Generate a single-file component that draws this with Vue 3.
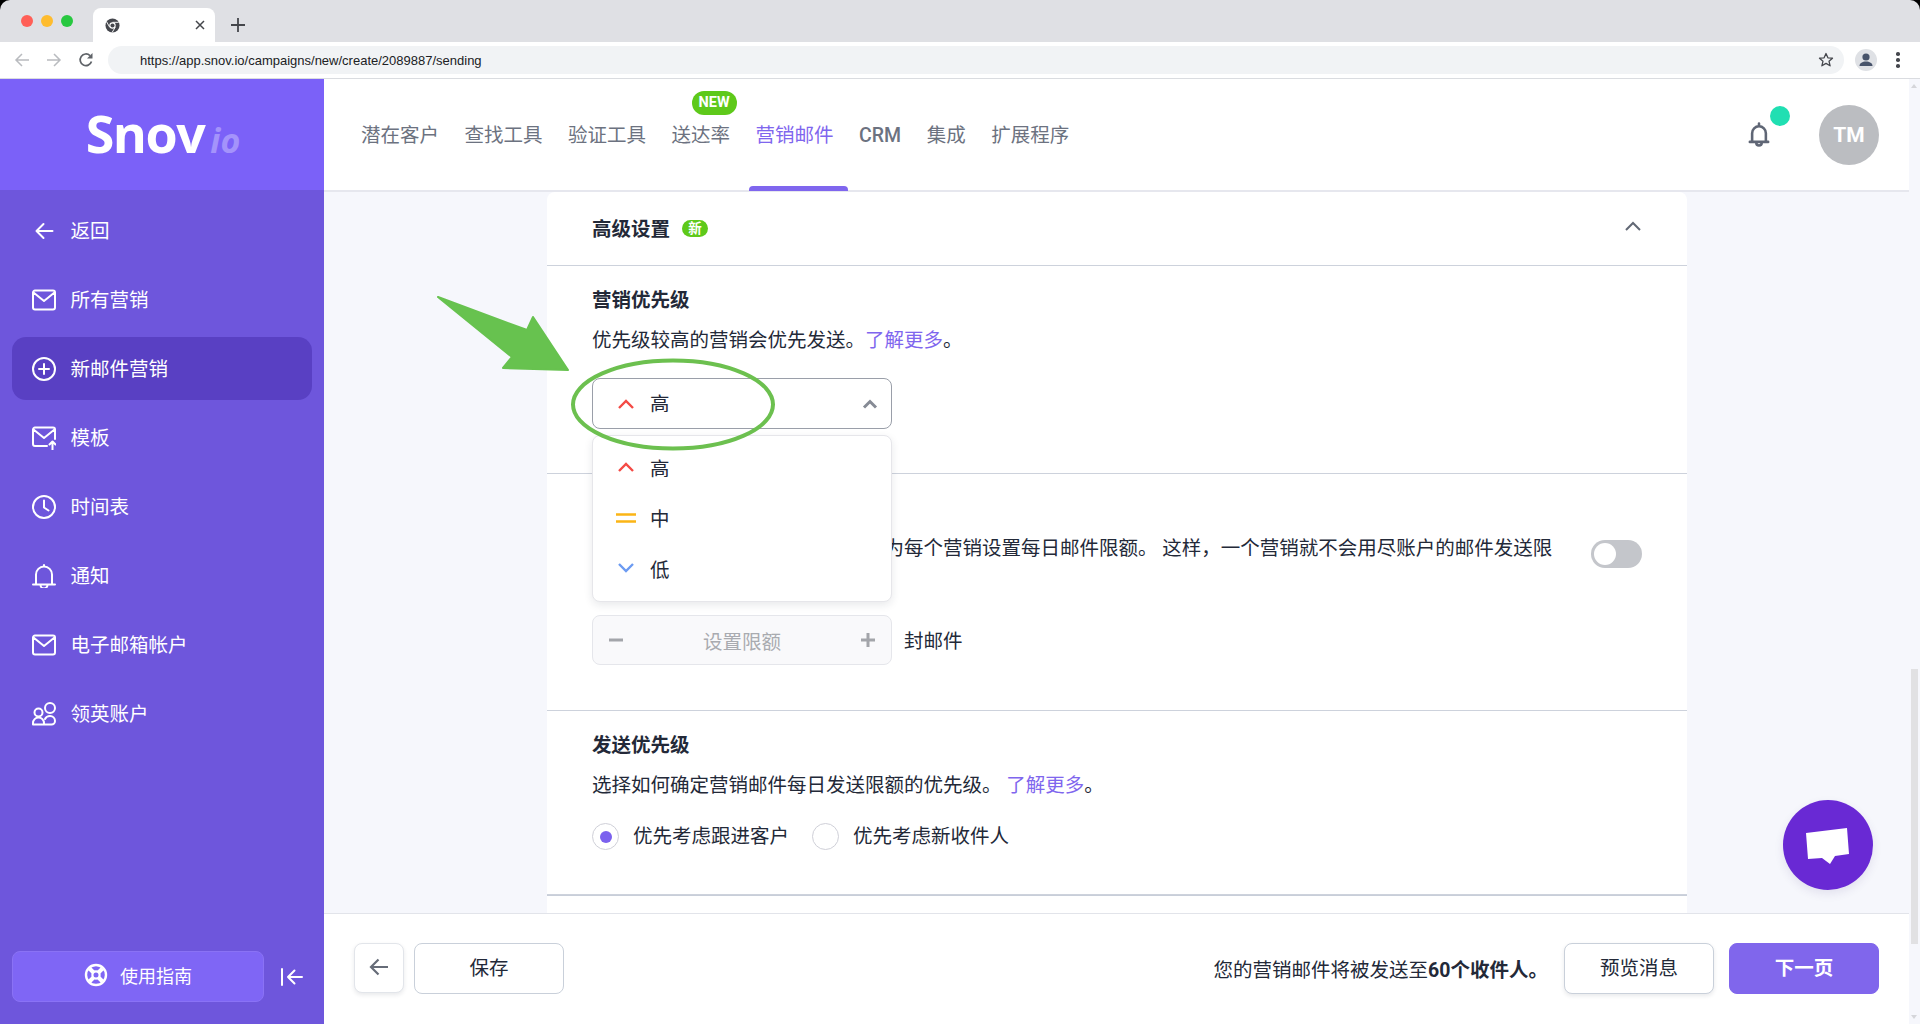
<template>
  <div class="browser">
    <!-- browser chrome -->
    <div class="tabstrip">
      <div class="lights">
        <span class="light red"></span>
        <span class="light yellow"></span>
        <span class="light green"></span>
      </div>
      <div class="tab">
        <svg class="favicon" viewBox="0 0 16 16" width="15" height="15">
          <circle cx="8" cy="8" r="7.5" fill="#45474d" />
          <circle cx="8" cy="8" r="3.4" fill="#fff" />
          <circle cx="8" cy="8" r="2.2" fill="#45474d" />
          <path d="M8 4.6h6.6M5 9.8 1.8 4.2M10.9 9.8l-3.3 5.6" stroke="#fff" stroke-width="1" />
        </svg>
        <svg class="tab-x" viewBox="0 0 10 10" width="10" height="10">
          <path d="M1 1l8 8M9 1l-8 8" stroke="#44464b" stroke-width="1.5" />
        </svg>
      </div>
      <svg class="tab-plus" viewBox="0 0 14 14" width="14" height="14">
        <path d="M7 0v14M0 7h14" stroke="#44464b" stroke-width="1.8" />
      </svg>
    </div>
    <div class="toolbar">
      <svg class="nav-btn" viewBox="0 0 16 16" width="16" height="16">
        <path d="M15 8H2M8 2 2 8l6 6" fill="none" stroke="#b9bbbf" stroke-width="1.5" />
      </svg>
      <svg class="nav-btn" viewBox="0 0 16 16" width="16" height="16">
        <path d="M1 8h13M8 2l6 6-6 6" fill="none" stroke="#b9bbbf" stroke-width="1.5" />
      </svg>
      <svg class="nav-btn" viewBox="0 0 16 16" width="16" height="16">
        <path d="M13.5 9.5A5.8 5.8 0 1 1 12 3.6" fill="none" stroke="#5f6368" stroke-width="1.7" />
        <path d="M14.5 1v5.5H9z" fill="#5f6368" />
      </svg>
      <div class="address">
        <span class="url">https://app.snov.io/campaigns/new/create/2089887/sending</span>
        <svg viewBox="0 0 16 16" width="16" height="16">
          <path d="M8 1.5l1.9 4.3 4.6.4-3.5 3 1.1 4.6L8 11.4l-4.1 2.4L5 9.2l-3.5-3 4.6-.4z" fill="none" stroke="#45474d" stroke-width="1.3" stroke-linejoin="round" />
        </svg>
      </div>
      <div class="profile">
        <svg viewBox="0 0 22 22" width="22" height="22">
          <circle cx="11" cy="11" r="11" fill="#dfe1e5" />
          <circle cx="11" cy="8" r="3.6" fill="#47536a" />
          <path d="M4.5 17c0-3 3-4.5 6.5-4.5s6.5 1.5 6.5 4.5z" fill="#47536a" />
        </svg>
      </div>
      <div class="kebab"><i></i><i></i><i></i></div>
    </div>

    <div class="page">
      <aside class="sidebar">
        <div class="logo"><span class="logo-main">Snov</span><span class="logo-io">io</span></div>
        <nav class="side-nav">
          <a v-for="item in sideItems" :key="item.label" class="side-item" :class="{ active: item.active }">
            <svg class="side-icon" viewBox="0 0 24 24" width="24" height="24">
              <path :d="item.icon" fill="none" stroke="#fff" stroke-width="2" stroke-linecap="round" stroke-linejoin="round" />
            </svg>
            <span>{{ item.label }}</span>
          </a>
        </nav>
        <div class="side-bottom">
          <button class="guide">
            <svg viewBox="0 0 24 24" width="24" height="24">
              <circle cx="12" cy="12" r="10" fill="none" stroke="#fff" stroke-width="2.4" />
              <circle cx="12" cy="12" r="3.6" fill="none" stroke="#fff" stroke-width="2.2" />
              <path d="M5.5 5.5l4 4M18.5 5.5l-4 4M5.5 18.5l4-4M18.5 18.5l-4-4" stroke="#fff" stroke-width="4" />
            </svg>
            使用指南
          </button>
          <svg class="collapse" viewBox="0 0 22 18" width="22" height="18">
            <path d="M1 1v16M21 9H7M13.5 2.5 7 9l6.5 6.5" fill="none" stroke="#fff" stroke-width="2" stroke-linecap="round" stroke-linejoin="round" />
          </svg>
        </div>
      </aside>

      <div class="main">
        <header class="topbar">
          <nav class="top-nav">
            <a v-for="item in topItems" :key="item.label" class="top-item" :class="{ active: item.active, latin: item.latin }">
              {{ item.label }}
              <span v-if="item.badge" class="new-badge">NEW</span>
            </a>
          </nav>
          <div class="top-right">
            <div class="bell">
              <svg viewBox="0 0 24 28" width="22" height="26">
                <path d="M4.5 21V12a7.5 7.5 0 0 1 15 0v9M2 21.5h20M9 22.5a3 3 0 0 0 6 0M12 1.5v3" fill="none" stroke="#5f6675" stroke-width="2.8" stroke-linecap="round" stroke-linejoin="round" />
              </svg>
              <span class="bell-dot"></span>
            </div>
            <div class="avatar">TM</div>
          </div>
        </header>

        <div class="content">
          <div class="card">
            <div class="card-head">
              <span class="card-title">高级设置</span>
              <span class="mini-badge">新</span>
              <svg class="head-chevron" viewBox="0 0 16 10" width="16" height="10">
                <path d="M1 9l7-7 7 7" fill="none" stroke="#626875" stroke-width="2" />
              </svg>
            </div>

            <section class="section">
              <h4 class="sec-title">营销优先级</h4>
              <p class="sec-text">优先级较高的营销会优先发送。<a class="link">了解更多</a>。</p>
              <div class="select-wrap">
                <div class="select">
                  <svg class="prio" viewBox="0 0 20 14" width="20" height="14">
                    <path d="M3 11l7-7 7 7" fill="none" stroke="#f44a45" stroke-width="2.4" />
                  </svg>
                  <span class="select-value">高</span>
                  <svg class="select-chevron" viewBox="0 0 16 10" width="16" height="10">
                    <path d="M2 8.5l6-6 6 6" fill="none" stroke="#868b95" stroke-width="3" />
                  </svg>
                </div>
                <div class="dropdown">
                  <div v-for="opt in priorities" :key="opt.label" class="option">
                    <svg class="prio" viewBox="0 0 20 14" width="20" height="14">
                      <path :d="opt.icon" fill="none" :stroke="opt.color" stroke-width="2.4" />
                    </svg>
                    <span>{{ opt.label }}</span>
                  </div>
                </div>
              </div>
            </section>

            <section class="section limit-section">
              <h4 class="sec-title">每日限额</h4>
              <div class="limit-row">
                <p class="sec-text limit-text">您可以根据自己的需要，分别单独为每个营销设置每日邮件限额。 这样，一个营销就不会用尽账户的邮件发送限额。</p>
                <span class="toggle"><i></i></span>
              </div>
              <div class="stepper-row">
                <div class="stepper">
                  <svg viewBox="0 0 16 16" width="16" height="16"><path d="M1 8h14" stroke="#a3a5aa" stroke-width="3" /></svg>
                  <span>设置限额</span>
                  <svg viewBox="0 0 16 16" width="16" height="16"><path d="M1 8h14M8 1v14" stroke="#a3a5aa" stroke-width="3" /></svg>
                </div>
                <span class="unit">封邮件</span>
              </div>
            </section>

            <section class="section">
              <h4 class="sec-title">发送优先级</h4>
              <p class="sec-text">选择如何确定营销邮件每日发送限额的优先级。 <a class="link">了解更多</a>。</p>
              <div class="radios">
                <label class="radio"><span class="radio-dot on"></span>优先考虑跟进客户</label>
                <label class="radio"><span class="radio-dot"></span>优先考虑新收件人</label>
              </div>
            </section>
            <div class="card-end"></div>
          </div>

          <div class="chat">
            <svg viewBox="0 0 50 50" width="50" height="50">
              <path d="M3 13 44 8 46 34 32 36 27 44 19 38 5 39z" fill="#fff" />
            </svg>
          </div>
        </div>

        <footer class="footer">
          <button class="btn back">
            <svg viewBox="0 0 20 18" width="20" height="18">
              <path d="M19 9H2M9.5 1.5 2 9l7.5 7.5" fill="none" stroke="#666c78" stroke-width="2.2" />
            </svg>
          </button>
          <button class="btn save">保存</button>
          <div class="summary">您的营销邮件将被发送至<b>60个收件人。</b></div>
          <button class="btn preview">预览消息</button>
          <button class="btn next">下一页</button>
        </footer>
      </div>

      <div class="scrollbar">
        <span class="arrow up"></span>
        <span class="thumb"></span>
        <span class="arrow down"></span>
      </div>
    </div>

    <!-- green markup drawn on top of the screenshot -->
    <svg class="markup" viewBox="0 0 1920 1024" width="1920" height="1024">
      <path d="M438 297 527 330 533 317 568 370 503 368 512 357z" fill="#67c24f" stroke="#67c24f" stroke-width="2" stroke-linejoin="round" />
      <ellipse cx="673" cy="404.5" rx="100" ry="44" fill="none" stroke="#6cc04f" stroke-width="4" />
    </svg>
  </div>
</template>

<script setup>
const mail = 'M3 2.5h18a2 2 0 0 1 2 2v15a2 2 0 0 1-2 2H3a2 2 0 0 1-2-2v-15a2 2 0 0 1 2-2zM1.5 4.5l10.5 8.5 10.5-8.5'

const sideItems = [
  { label: '返回', icon: 'M20.5 12H5M11.5 5l-7 7 7 7' },
  { label: '所有营销', icon: mail },
  { label: '新邮件营销', active: true, icon: 'M12 1a11 11 0 1 0 0 22a11 11 0 1 0 0-22zM12 7v10M7 12h10' },
  { label: '模板', icon: 'M15 20H3a2 2 0 0 1-2-2V3.5a2 2 0 0 1 2-2h18a2 2 0 0 1 2 2V13M1.5 3.5l10.5 8.5 10.5-8.5M20.5 24v-8M17.5 18.5l3-3 3 3' },
  { label: '时间表', icon: 'M12 1a11 11 0 1 0 0 22a11 11 0 1 0 0-22zM12 5.5v7l4.5 3' },
  { label: '通知', icon: 'M4 20V10.5a8 8 0 0 1 16 0V20M1 20.5h22M8.5 21a3.5 3.5 0 0 0 7 0M12 1v1.5' },
  { label: '电子邮箱帐户', icon: mail },
  { label: '领英账户', icon: 'M6.5 6.5a4 4 0 1 0 0 8a4 4 0 1 0 0-8zM18 1a5 5 0 1 0 0 10a5 5 0 1 0 0-10zM1 22.5h18.5a3.5 3.5 0 0 0 3.5-3.5a5 5 0 0 0-5-5c-2 0-4 1-5 3M1 22.5v-1.5a5.5 5.5 0 0 1 11 0v1.5' }
]

const topItems = [
  { label: '潜在客户' },
  { label: '查找工具' },
  { label: '验证工具' },
  { label: '送达率', badge: true },
  { label: '营销邮件', active: true },
  { label: 'CRM', latin: true },
  { label: '集成' },
  { label: '扩展程序' }
]

const priorities = [
  { label: '高', color: '#f44a45', icon: 'M3 11l7-7 7 7' },
  { label: '中', color: '#fbb516', icon: 'M0 3.5h20M0 10.5h20' },
  { label: '低', color: '#6c9bf2', icon: 'M3 3l7 7 7-7' }
]
</script>

<style>
html, body {
  margin: 0;
  overflow: hidden;
}
</style>

<style scoped>
.browser {
  position: relative;
  display: flex;
  flex-direction: column;
  width: 1920px;
  height: 1024px;
  overflow: hidden;
  background: #000;
  font-family: Roboto, "Noto Sans CJK SC", sans-serif;
  font-size: 19.5px;
  color: #232938;
}

.tabstrip {
  display: flex;
  align-items: flex-end;
  height: 42px;
  background: #dfe0e4;
  border-radius: 10px 10px 0 0;
}

.lights {
  display: flex;
  gap: 8px;
  align-self: flex-start;
  width: 72px;
  padding: 15px 0 0 21px;
}

.light {
  width: 12px;
  height: 12px;
  border-radius: 50%;
}

.red { background: #ff5f57; }
.yellow { background: #febc2e; }
.green { background: #28c840; }

.tab {
  display: flex;
  align-items: center;
  justify-content: space-between;
  box-sizing: border-box;
  width: 122px;
  height: 34px;
  padding: 0 10px 0 12px;
  background: #fff;
  border-radius: 8px 8px 0 0;
}

.tab-plus {
  align-self: flex-start;
  margin: 18px 0 0 16px;
}

.toolbar {
  display: flex;
  align-items: center;
  box-sizing: border-box;
  height: 37px;
  padding-left: 14px;
  background: #fff;
  border-bottom: 1px solid #dadce0;
}

.nav-btn {
  margin-right: 16px;
}

.address {
  display: flex;
  align-items: center;
  justify-content: space-between;
  box-sizing: border-box;
  width: 1736px;
  height: 28px;
  margin-left: -2px;
  padding: 0 10px 0 32px;
  background: #f1f3f5;
  border-radius: 14px;
  font-family: "Liberation Sans", sans-serif;
  font-size: 13px;
  color: #202124;
}

.profile {
  display: flex;
  margin-left: 11px;
}

.kebab {
  display: flex;
  flex-direction: column;
  gap: 2.5px;
  margin-left: 19px;
}

.kebab i {
  width: 3.5px;
  height: 3.5px;
  border-radius: 50%;
  background: #45474d;
}

.page {
  display: flex;
  flex: 1;
  min-height: 0;
}

.sidebar {
  display: flex;
  flex-direction: column;
  flex: none;
  width: 324px;
  background: #6e56dc;
}

.logo {
  display: flex;
  align-items: baseline;
  justify-content: center;
  box-sizing: border-box;
  height: 111px;
  padding: 19px 0 0 2px;
  background: #7b61f8;
  font-family: "Open Sans", sans-serif;
  color: #fff;
}

.logo-main {
  font-size: 52px;
  font-weight: 700;
  letter-spacing: -1.5px;
  line-height: 70px;
}

.logo-io {
  margin-left: 6px;
  font-size: 34px;
  font-style: italic;
  font-weight: 700;
  color: #a493fb;
}

.side-nav {
  display: flex;
  flex-direction: column;
  flex: 1;
  gap: 6px;
  padding: 9px 12px 0;
}

.side-item {
  display: flex;
  align-items: center;
  height: 63px;
  padding-left: 20px;
  border-radius: 14px;
  color: #fff;
}

.side-item span {
  margin-top: -1.5px;
}

.side-item.active {
  background: #5940c3;
}

.side-icon {
  margin-right: 14.5px;
}

.side-bottom {
  display: flex;
  align-items: center;
  padding: 0 0 22px 12px;
}

.guide {
  display: flex;
  align-items: center;
  justify-content: center;
  gap: 12px;
  box-sizing: border-box;
  width: 252px;
  height: 51px;
  padding: 0 0 4px;
  background: #7f66f5;
  border: 1px solid #8a72f5;
  border-radius: 8px;
  color: #fff;
  font: inherit;
  font-size: 18px;
}

.collapse {
  margin-left: 17px;
}

.main {
  display: flex;
  flex-direction: column;
  flex: 1;
  min-width: 0;
}

.topbar {
  display: flex;
  flex: none;
  align-items: center;
  justify-content: space-between;
  box-sizing: border-box;
  height: 113px;
  padding: 0 30px 0 37px;
  background: #fff;
  border-bottom: 2px solid #e6e7ee;
}

.top-nav {
  display: flex;
  gap: 25.5px;
  margin-top: 2px;
}

.top-item {
  position: relative;
  color: #6c7280;
  line-height: 28px;
}

.top-item.latin {
  font-weight: 500;
}

.top-item.active {
  color: #7f66ee;
}

.top-item.active::after {
  content: "";
  position: absolute;
  left: -7px;
  right: -14px;
  bottom: -41.5px;
  height: 5px;
  background: #7f66ee;
  border-radius: 4px 4px 0 0;
}

.new-badge {
  position: absolute;
  top: -31px;
  left: 20px;
  width: 45px;
  height: 24px;
  background: #5ec91a;
  border-radius: 12px;
  color: #fff;
  font-size: 14.5px;
  font-weight: 700;
  line-height: 24px;
  text-align: center;
}

.top-right {
  display: flex;
  align-items: center;
}

.bell {
  position: relative;
  display: flex;
  margin-right: 49px;
}

.bell-dot {
  position: absolute;
  top: -16px;
  right: -20px;
  width: 20px;
  height: 20px;
  background: #20dfb2;
  border-radius: 50%;
}

.avatar {
  width: 60px;
  height: 60px;
  background: #bbbdc1;
  border-radius: 50%;
  color: #fff;
  font-size: 21px;
  font-weight: 700;
  line-height: 60px;
  text-align: center;
}

.content {
  position: relative;
  flex: 1;
  min-height: 0;
  overflow: hidden;
  background: #f6f7fc;
}

.card {
  display: flex;
  flex-direction: column;
  width: 1140px;
  height: 100%;
  margin-left: 223px;
  background: #fff;
  border-radius: 8px 8px 0 0;
}

.card-head {
  display: flex;
  flex: none;
  align-items: center;
  box-sizing: border-box;
  height: 74px;
  padding: 0 45px;
  border-bottom: 1px solid #cdd2dc;
}

.card-title {
  margin-top: -2px;
  font-weight: 700;
}

.mini-badge {
  width: 26px;
  height: 17px;
  margin-left: 12px;
  background: #5ec91a;
  border-radius: 9px;
  color: #fff;
  font-size: 13.5px;
  font-weight: 700;
  line-height: 17px;
  text-align: center;
}

.head-chevron {
  margin: -6px 1px 0 auto;
}

.section {
  flex: none;
  padding: 20.5px 45px 44px;
  border-bottom: 1px solid #cdd2dc;
}

.limit-section {
  padding-bottom: 45px;
}

.sec-title {
  margin: 0 0 12px;
  font-size: inherit;
  font-weight: 700;
  line-height: 28px;
}

.sec-text {
  margin: 0;
  line-height: 28px;
}

.link {
  color: #7f66ee;
}

.select-wrap {
  position: relative;
  width: 300px;
  margin-top: 23.5px;
}

.select {
  display: flex;
  align-items: center;
  box-sizing: border-box;
  height: 51px;
  padding: 0 13px 0 23px;
  border: 1px solid #9a9fa9;
  border-radius: 8px;
}

.select-value {
  margin-top: -2px;
}

.prio {
  margin-right: 14px;
}

.select-chevron {
  margin-left: auto;
}

.dropdown {
  position: absolute;
  top: 57px;
  left: 0;
  right: 0;
  z-index: 2;
  box-sizing: border-box;
  height: 167px;
  padding: 6px 0;
  background: #fff;
  border: 1px solid #e6e6ea;
  border-radius: 8px;
  box-shadow: 0 3px 8px rgba(30, 35, 60, 0.1);
}

.option {
  display: flex;
  align-items: center;
  height: 50.5px;
  padding-left: 23px;
}

.limit-row {
  display: flex;
  align-items: flex-start;
  justify-content: space-between;
}

.limit-text {
  width: 965px;
}

.toggle {
  display: flex;
  align-items: center;
  box-sizing: border-box;
  width: 51px;
  height: 28px;
  margin-top: 5.5px;
  padding: 0 3px;
  background: #c4c6cb;
  border-radius: 14px;
}

.toggle i {
  width: 22px;
  height: 22px;
  background: #fff;
  border-radius: 50%;
}

.stepper-row {
  display: flex;
  align-items: center;
  gap: 12px;
  margin-top: 24.5px;
}

.unit {
  margin-top: -2px;
}

.stepper {
  display: flex;
  align-items: center;
  justify-content: space-between;
  box-sizing: border-box;
  width: 300px;
  height: 50px;
  padding: 0 15px;
  background: #f9f9fb;
  border: 1px solid #e5e6eb;
  border-radius: 8px;
  color: #a9abb0;
}

.radios {
  display: flex;
  gap: 23px;
  margin-top: 23.5px;
}

.radio {
  display: flex;
  align-items: center;
  gap: 14px;
  line-height: 27px;
}

.radio-dot {
  display: flex;
  align-items: center;
  justify-content: center;
  box-sizing: border-box;
  width: 27px;
  height: 27px;
  border: 1px solid #cfd0d8;
  border-radius: 50%;
}

.radio-dot.on::after {
  content: "";
  width: 12px;
  height: 12px;
  background: #7b61ee;
  border-radius: 50%;
}

.card-end {
  border-top: 1px solid #c8ced9;
}

.chat {
  position: absolute;
  top: 608px;
  left: 1459px;
  display: flex;
  align-items: center;
  justify-content: center;
  width: 90px;
  height: 90px;
  background: #6929d4;
  border-radius: 50%;
  box-shadow: 0 4px 10px rgba(60, 40, 120, 0.1);
}

.footer {
  display: flex;
  flex: none;
  align-items: center;
  box-sizing: border-box;
  height: 111px;
  padding: 0 30px 2px;
  background: #fff;
  border-top: 1px solid #e2e4ea;
}

.btn {
  box-sizing: border-box;
  height: 51px;
  padding: 0 0 3px;
  background: #fff;
  border: 1px solid #c9d0da;
  border-radius: 8px;
  color: inherit;
  font: inherit;
}

.back {
  display: flex;
  align-items: center;
  justify-content: center;
  width: 50px;
  height: 50px;
  margin-right: 10px;
  border-color: #e2e5ea;
  box-shadow: 0 2px 4px rgba(30, 35, 60, 0.1);
}

.save {
  width: 150px;
}

.summary {
  margin-left: auto;
  margin-right: 16px;
}

.summary b {
  font-weight: 700;
}

.preview {
  width: 150px;
  margin-right: 15px;
  box-shadow: 0 2px 4px rgba(30, 35, 60, 0.1);
}

.next {
  width: 150px;
  background: #8066ec;
  border-color: #8066ec;
  color: #fff;
  font-weight: 700;
}

.scrollbar {
  position: relative;
  flex: none;
  width: 11px;
  background: #f6f7fc;
}

.thumb {
  position: absolute;
  top: 590px;
  left: 2px;
  right: 2px;
  height: 275px;
  background: #e1e1e3;
}

.arrow {
  position: absolute;
  left: 2px;
  border-left: 3.5px solid transparent;
  border-right: 3.5px solid transparent;
}

.arrow.up {
  top: 5px;
  border-bottom: 4px solid #d5d6da;
}

.arrow.down {
  bottom: 5px;
  border-top: 4px solid #d5d6da;
}

.markup {
  position: absolute;
  top: 0;
  left: 0;
  z-index: 5;
  pointer-events: none;
}
</style>
